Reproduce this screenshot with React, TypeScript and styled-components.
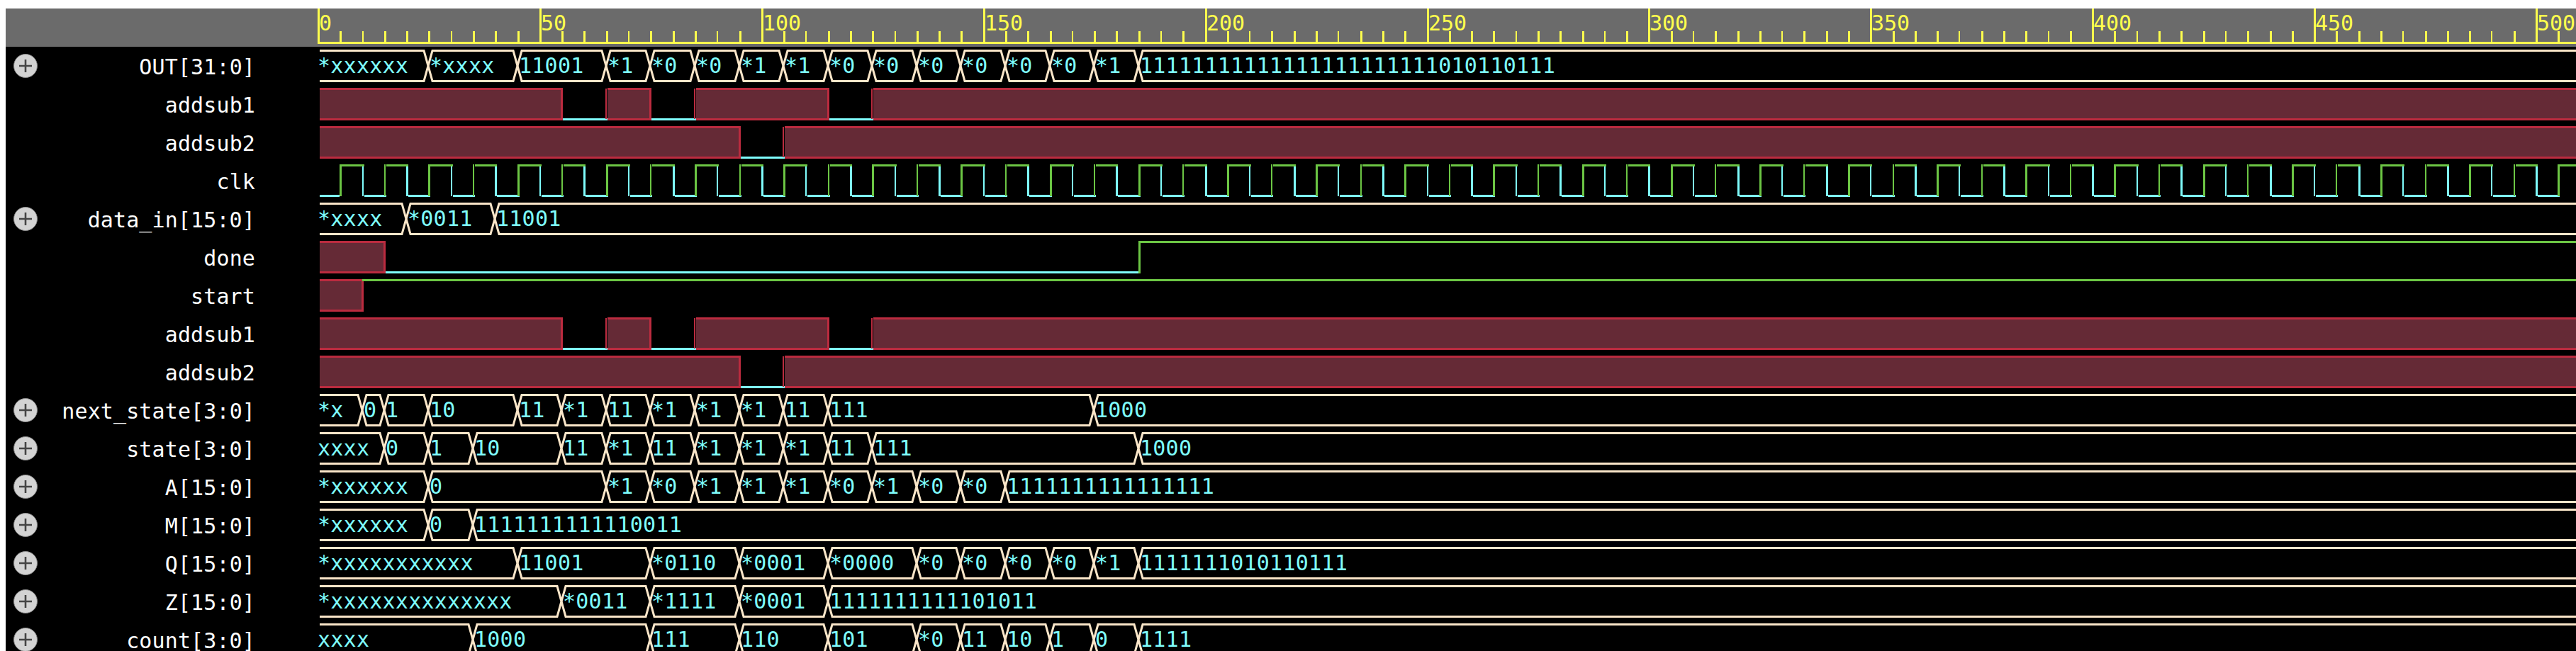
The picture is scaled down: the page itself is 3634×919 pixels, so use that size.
import React from "react";
import styled, { createGlobalStyle } from "styled-components";

const TRACK_WIDTH = 3186;
const PX_PER_TICK = 6.258;
const at = (t: number) => Math.round(t * PX_PER_TICK);

const colors = {
  green: "#6cc644",
  cyan: "#7ffdfd",
  beige: "#fae6c9",
  red: "#bb2b3f",
  maroon: "#652a36",
  yellow: "#ffff4d",
};

type Level = "x" | "0" | "1";
type Seg = [number, string];
type Bit = [number, Level];

type Signal =
  | { name: string; kind: "bus"; segs: Seg[] }
  | { name: string; kind: "bit"; bits: Bit[] }
  | { name: string; kind: "clock" };

const addsub1: Bit[] = [[0, "x"], [55, "0"], [65, "x"], [75, "0"], [85, "x"], [115, "0"], [125, "x"]];
const addsub2: Bit[] = [[0, "x"], [95, "0"], [105, "x"]];

const signals: Signal[] = [
  {
    name: "OUT[31:0]",
    kind: "bus",
    segs: [
      [0, "*xxxxxx"], [25, "*xxxx"], [45, "11001"], [65, "*1"], [75, "*0"], [85, "*0"], [95, "*1"], [105, "*1"],
      [115, "*0"], [125, "*0"], [135, "*0"], [145, "*0"], [155, "*0"], [165, "*0"], [175, "*1"],
      [185, "11111111111111111111111010110111"],
    ],
  },
  { name: "addsub1", kind: "bit", bits: addsub1 },
  { name: "addsub2", kind: "bit", bits: addsub2 },
  { name: "clk", kind: "clock" },
  { name: "data_in[15:0]", kind: "bus", segs: [[0, "*xxxx"], [20, "*0011"], [40, "11001"]] },
  { name: "done", kind: "bit", bits: [[0, "x"], [15, "0"], [185, "1"]] },
  { name: "start", kind: "bit", bits: [[0, "x"], [10, "1"]] },
  { name: "addsub1", kind: "bit", bits: addsub1 },
  { name: "addsub2", kind: "bit", bits: addsub2 },
  {
    name: "next_state[3:0]",
    kind: "bus",
    segs: [
      [0, "*x"], [10, "0"], [15, "1"], [25, "10"], [45, "11"], [55, "*1"], [65, "11"], [75, "*1"], [85, "*1"],
      [95, "*1"], [105, "11"], [115, "111"], [175, "1000"],
    ],
  },
  {
    name: "state[3:0]",
    kind: "bus",
    segs: [
      [0, "xxxx"], [15, "0"], [25, "1"], [35, "10"], [55, "11"], [65, "*1"], [75, "11"], [85, "*1"], [95, "*1"],
      [105, "*1"], [115, "11"], [125, "111"], [185, "1000"],
    ],
  },
  {
    name: "A[15:0]",
    kind: "bus",
    segs: [
      [0, "*xxxxxx"], [25, "0"], [65, "*1"], [75, "*0"], [85, "*1"], [95, "*1"], [105, "*1"], [115, "*0"],
      [125, "*1"], [135, "*0"], [145, "*0"], [155, "1111111111111111"],
    ],
  },
  { name: "M[15:0]", kind: "bus", segs: [[0, "*xxxxxx"], [25, "0"], [35, "1111111111110011"]] },
  {
    name: "Q[15:0]",
    kind: "bus",
    segs: [
      [0, "*xxxxxxxxxxx"], [45, "11001"], [75, "*0110"], [95, "*0001"], [115, "*0000"], [135, "*0"], [145, "*0"],
      [155, "*0"], [165, "*0"], [175, "*1"], [185, "1111111010110111"],
    ],
  },
  {
    name: "Z[15:0]",
    kind: "bus",
    segs: [[0, "*xxxxxxxxxxxxxx"], [55, "*0011"], [75, "*1111"], [95, "*0001"], [115, "1111111111101011"]],
  },
  {
    name: "count[3:0]",
    kind: "bus",
    segs: [
      [0, "xxxx"], [35, "1000"], [75, "111"], [95, "110"], [115, "101"], [135, "*0"], [145, "11"], [155, "10"],
      [165, "1"], [175, "0"], [185, "1111"],
    ],
  },
];

const GlobalStyle = createGlobalStyle`
  html, body {
    margin: 0;
    background: #fff;
    overflow: hidden;
  }
`;

const Viewer = styled.div`
  width: 3626px;
  height: 907px;
  margin: 12px 0 0 8px;
  background: #000;
  overflow: hidden;
  font-family: "DejaVu Sans Mono", monospace;
  font-size: 30px;
`;

const Row = styled.div`
  display: grid;
  grid-template-columns: 440px ${TRACK_WIDTH}px;
  height: 54px;
`;

const Header = styled(Row)`
  background: #6b6b6b;
`;

const NameCell = styled.div`
  display: flex;
  align-items: flex-start;
  padding: 0 88px 0 11px;
`;

const Expand = styled.svg`
  flex: none;
  width: 34px;
  height: 34px;
  margin-top: 10px;
`;

const Name = styled.span`
  margin-left: auto;
  padding-top: 2px;
  line-height: 54px;
  letter-spacing: 0.12px;
  color: #fff;
  white-space: pre;
`;

const Track = styled.div`
  display: flex;
  height: 54px;
`;

const Segment = styled.div`
  position: relative;
  flex: none;
  height: 54px;
`;

const SegmentShape = styled.svg`
  position: absolute;
  top: 0;
  left: 0;
  overflow: visible;
  fill: none;
  stroke: ${colors.beige};
  stroke-width: 3;
`;

const SegmentValue = styled.span<{ $first: boolean }>`
  position: relative;
  display: block;
  padding-left: ${(p) => (p.$first ? 0 : 2)}px;
  line-height: 54px;
  letter-spacing: 0.25px;
  color: ${colors.cyan};
  white-space: pre;
`;

const Drawing = styled.svg`
  display: block;
  shape-rendering: crispEdges;
`;

const RulerText = styled.text`
  font-family: "DejaVu Sans Mono", monospace;
  font-size: 30px;
  fill: ${colors.yellow};
`;

const ExpandIcon = () => (
  <Expand viewBox="0 0 34 34">
    <circle cx="17" cy="17" r="16.5" fill="#d3d3d3" stroke="#8c8c8c" />
    <path d="M8 17H26M17 8V26" stroke="#454545" strokeWidth="2.6" />
  </Expand>
);

const Ruler = () => {
  const ticks: number[] = [];
  for (let t = 0; t <= 510; t += 5) ticks.push(t);
  return (
    <Drawing width={TRACK_WIDTH} height={54}>
      {ticks.map((t, i) => {
        const major = t % 50 === 0;
        return (
          <rect
            key={t}
            x={at(t)}
            y={major ? 0 : 32}
            width={major || i % 4 !== 2 ? 3 : 2}
            height={major ? 48 : 16}
            fill={colors.yellow}
          />
        );
      })}
      <rect x={0} y={47} width={TRACK_WIDTH} height={3} fill={colors.yellow} />
      {ticks
        .filter((t) => t % 50 === 0)
        .map((t) => (
          <RulerText key={t} x={at(t) + 2} y={31}>
            {t}
          </RulerText>
        ))}
    </Drawing>
  );
};

const BusWave = ({ segs }: { segs: Seg[] }) => (
  <Track>
    {segs.map(([from, value], i) => {
      const first = i === 0;
      const last = i === segs.length - 1;
      const left = at(from);
      const w = (last ? TRACK_WIDTH : at(segs[i + 1][0])) - left;
      const startX = first ? 3 : 6;
      const endX = last ? w : w - 6;
      const d = [
        `M${first ? 3 : 0} ${first ? 5.5 : 27}`,
        first ? "" : `L${startX} 5.5`,
        `L${endX} 5.5`,
        last ? "" : `L${w} 27`,
        last ? `M${w} 48.5` : `L${endX} 48.5`,
        `L${startX} 48.5`,
        first ? "" : "L0 27",
      ].join(" ");
      return (
        <Segment key={from} style={{ width: w }}>
          <SegmentShape width={w} height={54}>
            <path d={d} />
          </SegmentShape>
          <SegmentValue $first={first}>{value}</SegmentValue>
        </Segment>
      );
    })}
  </Track>
);

const BitWave = ({ bits }: { bits: Bit[] }) => (
  <Drawing width={TRACK_WIDTH} height={54}>
    {bits.map(([from, level], i) => {
      const x0 = at(from);
      const hasNext = i < bits.length - 1;
      const x1 = hasNext ? at(bits[i + 1][0]) : TRACK_WIDTH;
      if (level === "0") {
        return <rect key={from} x={x0 + 2} y={47} width={x1 - x0} height={3} fill={colors.cyan} />;
      }
      if (level === "1") {
        return (
          <g key={from} fill={colors.green}>
            <rect x={x0} y={4} width={x1 - x0} height={3} />
            {bits[i - 1][1] === "0" && <rect x={x0} y={4} width={3} height={46} />}
          </g>
        );
      }
      // the unknown box runs a little past its last tick, and the first one starts after the wave's left margin
      const boxLeft = i === 0 ? 3 : x0 + 2;
      const boxRight = hasNext ? x1 + 2 : TRACK_WIDTH;
      return (
        <g key={from}>
          {i > 0 && <rect x={x0 - 1} y={5} width={2} height={43} fill={colors.red} />}
          <rect x={boxLeft} y={4} width={boxRight - boxLeft} height={46} fill={colors.red} />
          <rect x={boxLeft} y={7} width={boxRight - boxLeft - (hasNext ? 3 : 0)} height={40} fill={colors.maroon} />
        </g>
      );
    })}
  </Drawing>
);

const ClockWave = () => {
  const cycles: number[] = [];
  for (let t = 5; t < 510; t += 10) cycles.push(t);
  return (
    <Drawing width={TRACK_WIDTH} height={54}>
      <rect x={3} y={47} width={at(5) - 3} height={3} fill={colors.cyan} />
      {cycles.map((t, i) => {
        const rise = at(t);
        const fall = at(t + 5);
        const next = at(t + 10);
        return (
          <g key={t}>
            <rect x={rise} y={4} width={i % 2 ? 2 : 3} height={45} fill={colors.green} />
            <rect x={fall} y={4} width={i % 2 ? 3 : 2} height={45} fill={colors.cyan} />
            <rect x={rise + 3} y={4} width={fall - rise} height={3} fill={colors.green} />
            <rect x={fall + 3} y={47} width={next - fall} height={3} fill={colors.cyan} />
          </g>
        );
      })}
    </Drawing>
  );
};

const Wave = ({ signal }: { signal: Signal }) => {
  if (signal.kind === "bus") return <BusWave segs={signal.segs} />;
  if (signal.kind === "bit") return <BitWave bits={signal.bits} />;
  return <ClockWave />;
};

const App = () => (
  <>
    <GlobalStyle />
    <Viewer>
      <Header>
        <div />
        <Ruler />
      </Header>
      {signals.map((signal, i) => (
        <Row key={i}>
          <NameCell>
            {signal.kind === "bus" && <ExpandIcon />}
            <Name>{signal.name}</Name>
          </NameCell>
          <Wave signal={signal} />
        </Row>
      ))}
    </Viewer>
  </>
);

export default App;
